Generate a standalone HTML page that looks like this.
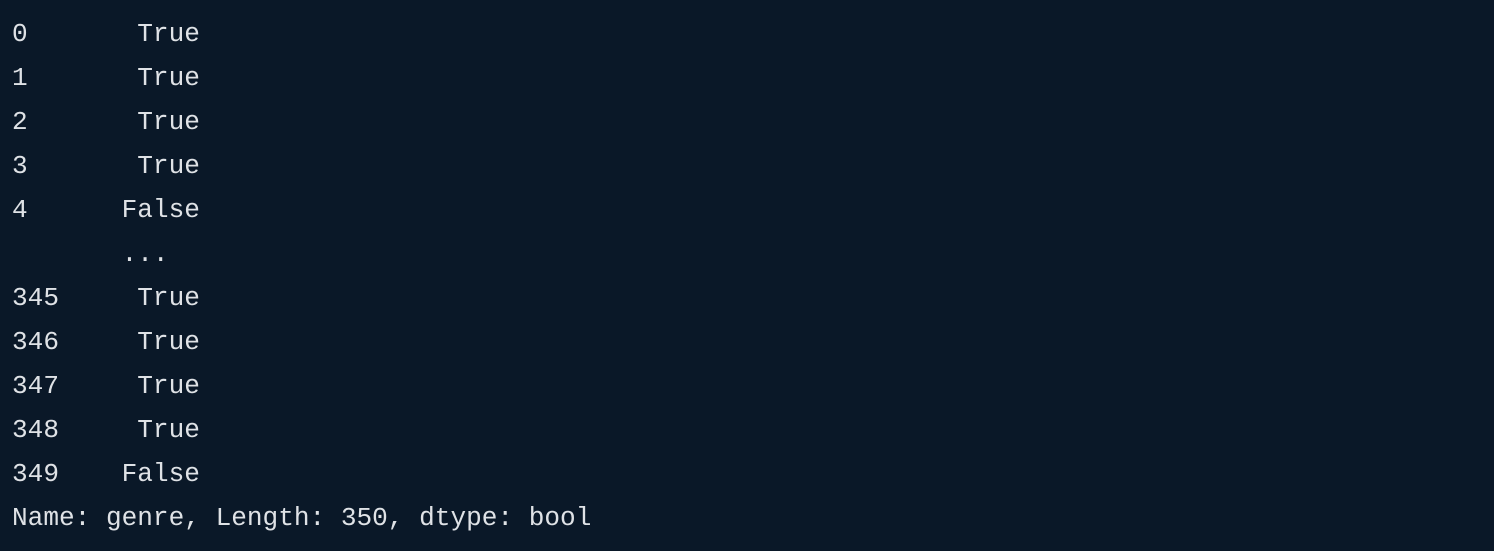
<!DOCTYPE html>
<html><head><meta charset="utf-8"><style>
html,body{margin:0;padding:0;width:1494px;height:551px;background:#0a1828;overflow:hidden}
pre{margin:0;padding:12px 0 0 12px;font-family:"Liberation Mono",monospace;font-size:26.1px;line-height:44px;color:#dfe2e6}
</style></head><body><pre>0       True
1       True
2       True
3       True
4      False
       ...
345     True
346     True
347     True
348     True
349    False
Name: genre, Length: 350, dtype: bool</pre></body></html>
